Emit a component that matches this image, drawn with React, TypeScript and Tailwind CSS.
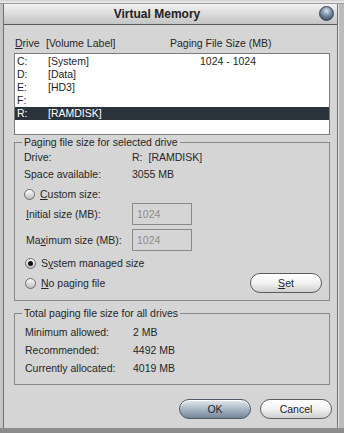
const drives = [
  { letter: 'C:', label: '[System]', size: '1024 - 1024' },
  { letter: 'D:', label: '[Data]', size: '' },
  { letter: 'E:', label: '[HD3]', size: '' },
  { letter: 'F:', label: '', size: '' },
  { letter: 'R:', label: '[RAMDISK]', size: '', selected: true },
]

function Radio({ checked }: { checked?: boolean }) {
  return (
    <span className="flex h-[11px] w-[11px] shrink-0 items-center justify-center rounded-full border border-[#6a6a6a] bg-gradient-to-b from-[#ffffff] to-[#bdbdbd]">
      {checked && <span className="h-[5px] w-[5px] rounded-full bg-[#111]" />}
    </span>
  )
}

function PillButton({ children, primary }: { children: React.ReactNode; primary?: boolean }) {
  return (
    <button
      className={
        primary
          ? 'flex h-[20px] w-[72px] items-center justify-center rounded-full border border-[#4f5864] bg-gradient-to-b from-[#e4eaf0] via-[#a9b6c4] to-[#75869a] text-[#1d2733] shadow-[inset_0_1px_0_#ffffff]'
          : 'flex h-[20px] w-[72px] items-center justify-center rounded-full border border-[#5c5c5c] bg-gradient-to-b from-[#ffffff] via-[#f2f2f2] to-[#cfcfcf] text-[#222] shadow-[inset_0_1px_0_#ffffff]'
      }
    >
      {children}
    </button>
  )
}

function InfoRow({ label, value, h }: { label: string; value: React.ReactNode; h: string }) {
  return (
    <div className={`flex items-center ${h}`}>
      <span className="w-[108px]">{label}</span>
      <span>{value}</span>
    </div>
  )
}

export default function App() {
  return (
    <div className="flex h-[433px] w-[344px] flex-col overflow-hidden bg-[#c4c4c4] font-['Liberation_Sans',Arial,sans-serif] text-[10.5px] leading-[13px] text-[#262626]">
      {/* behind the dialog: edge of the parent window */}
      <div className="h-[4px] shrink-0 border-b border-[#9a9a9a] bg-gradient-to-b from-[#cfcfcf] to-[#f0f0f0]" />

      <div className="flex">
        <div className="ml-[3px] flex h-[424px] w-[335px] flex-col border-x border-[#6f6f6f] bg-[#d5d5d5]">
          {/* title bar */}
          <div className="relative flex h-[21px] shrink-0 items-center justify-center border-b border-[#5a5a5a] bg-gradient-to-b from-[#f2f2f2] to-[#c4c4c4]">
            <span className="-ml-[27px] text-[12px] font-bold text-[#222]">Virtual Memory</span>
            <span className="absolute right-[3px] top-[2px] h-[15px] w-[15px] rounded-full border border-[#3b4654] bg-[radial-gradient(circle_at_50%_30%,#dbe4ee_0%,#7d93ad_40%,#2a3748_100%)]" />
          </div>

          {/* body */}
          <div className="flex flex-col pl-[10px] pr-[7px] pt-[12px]">
            <div className="flex h-[13px] items-center">
              <span className="w-[32px] pl-[1px]">
                <span className="underline">D</span>rive
              </span>
              <span className="w-[124px]">[Volume Label]</span>
              <span>Paging File Size (MB)</span>
            </div>

            <div className="mt-[3px] h-[82px] border border-[#7c7c7c] bg-white pt-[1px]">
              {drives.map((d) => (
                <div
                  key={d.letter}
                  className={`flex h-[13px] items-center pl-[2px] ${d.selected ? 'bg-[#2b333c] text-white' : 'text-[#1e1e1e]'}`}
                >
                  <span className="w-[31px]">{d.letter}</span>
                  <span className="w-[152px]">{d.label}</span>
                  <span>{d.size}</span>
                </div>
              ))}
            </div>

            <fieldset className="mt-[1px] border border-[#8a8a8a] pb-[6px] pl-[9px] pr-[7px]">
              <legend className="-ml-[2px] px-[2px] leading-[13px]">Paging file size for selected drive</legend>
              <InfoRow
                label="Drive:"
                value={
                  <span className="flex gap-[6px]">
                    <span>R:</span>
                    <span>[RAMDISK]</span>
                  </span>
                }
                h="h-[17px]"
              />
              <InfoRow label="Space available:" value="3055 MB" h="h-[17px]" />

              <div className="mt-[3px] flex h-[17px] items-center gap-[5px]">
                <Radio />
                <span>
                  <span className="underline">C</span>ustom size:
                </span>
              </div>

              <div className="flex h-[22px] items-center">
                <span className="w-[108px] pl-[2px]">
                  <span className="underline">I</span>nitial size (MB):
                </span>
                <div className="flex h-[22px] w-[60px] items-center border border-[#8a8a8a] pl-[4px] text-[#8c8c8c]">
                  1024
                </div>
              </div>
              <div className="mt-[4px] flex h-[22px] items-center">
                <span className="w-[108px] pl-[2px]">
                  Ma<span className="underline">x</span>imum size (MB):
                </span>
                <div className="flex h-[22px] w-[60px] items-center border border-[#8a8a8a] pl-[4px] text-[#8c8c8c]">
                  1024
                </div>
              </div>

              <div className="mt-[3px] flex h-[19px] items-center gap-[5px] pl-[1px]">
                <Radio checked />
                <span>
                  S<span className="underline">y</span>stem managed size
                </span>
              </div>
              <div className="flex h-[21px] items-center justify-between pl-[1px]">
                <div className="flex items-center gap-[5px]">
                  <Radio />
                  <span>
                    <span className="underline">N</span>o paging file
                  </span>
                </div>
                <div className="h-[21px]">
                  <PillButton>
                    <span className="underline">S</span>et
                  </PillButton>
                </div>
              </div>
            </fieldset>

            <fieldset className="mt-[6px] border border-[#8a8a8a] pb-[7px] pl-[10px] pt-[3px]">
              <legend className="-ml-[3px] px-[2px] leading-[13px]">Total paging file size for all drives</legend>
              <InfoRow label="Minimum allowed:" value="2 MB" h="h-[18px]" />
              <InfoRow label="Recommended:" value="4492 MB" h="h-[18px]" />
              <InfoRow label="Currently allocated:" value="4019 MB" h="h-[18px]" />
            </fieldset>

            <div className="-mr-[2px] mt-[14px] flex justify-end gap-[9px]">
              <PillButton primary>OK</PillButton>
              <PillButton>Cancel</PillButton>
            </div>
          </div>
        </div>
        <div className="h-[424px] w-[6px] border-l border-[#e6e6e6] bg-[#bcbcbc]" />
      </div>

      <div className="h-[5px] shrink-0 bg-[#8c8c8c]" />
    </div>
  )
}
